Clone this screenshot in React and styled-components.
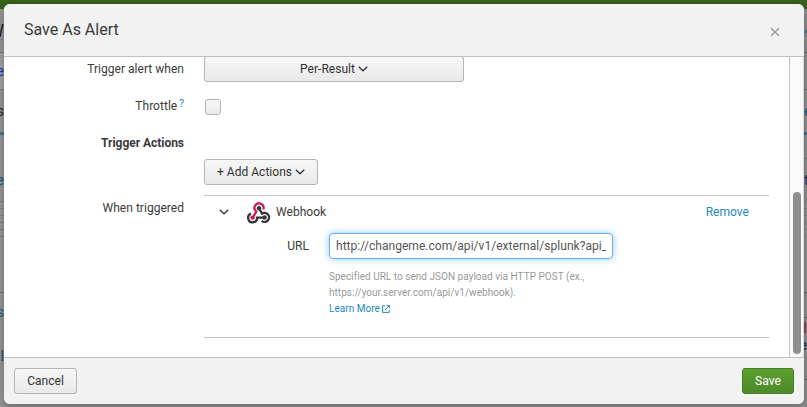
import React from "react";
import styled, { createGlobalStyle, css } from "styled-components";

const GlobalStyle = createGlobalStyle`
  * { box-sizing: border-box; }
  html, body { margin: 0; width: 100%; height: 100%; overflow: hidden; }
  body { font: 12px/16px Roboto, "Liberation Sans", sans-serif; color: #3a3a3a; letter-spacing: 0.03px; }
`;

const Page = styled.div`
  position: relative;
  width: 807px;
  height: 407px;
  overflow: hidden;
  background: #8c8c8c;
`;
const TopBar = styled.div`
  height: 9px;
  background: #38611c;
`;
const Backdrop = styled.div`
  display: flex;
  justify-content: space-between;
`;
const Edge = styled.div`
  width: ${(p) => p.$w}px;
  height: 398px;
  overflow: hidden;
  background: ${(p) => p.$bg};
`;
const Strip = styled.div`
  display: flex;
  justify-content: ${(p) => p.$side || "flex-end"};
  align-items: center;
  height: ${(p) => p.$h}px;
  background: ${(p) => p.$bg || "transparent"};
  border-bottom: ${(p) => (p.$line ? `1px solid ${p.$line}` : "0")};
  color: ${(p) => p.$ink || "#222"};
  font-size: ${(p) => p.$size || 14}px;
  line-height: 14px;
  overflow: hidden;
`;

const Modal = styled.section`
  position: absolute;
  left: 4px;
  top: 4px;
  width: 800px;
  height: 400px;
  display: flex;
  flex-direction: column;
  overflow: hidden;
  border-radius: 6px;
  background: #fff;
`;
const ModalShadow = styled.div`
  position: absolute;
  left: 4px;
  top: 4px;
  width: 800px;
  height: 400px;
  border-radius: 6px;
  box-shadow: 0 2px 6px rgba(0, 0, 0, 0.25);
`;
const Header = styled.header`
  flex: 0 0 53px;
  display: flex;
  align-items: center;
  justify-content: space-between;
  padding: 0 24px 1px 20px;
  background: #f2f2f2;
  border-bottom: 1px solid #c0c0c0;
`;
const Title = styled.h1`
  margin: 0;
  font-size: 16px;
  line-height: 20px;
  font-weight: 400;
  letter-spacing: 0;
`;
const Close = styled.button`
  display: flex;
  margin-top: 5px;
  padding: 0;
  border: 0;
  background: none;
  color: #a3a3a3;
`;
const Body = styled.div`
  flex: 0 0 300px;
  display: flex;
  overflow: hidden;
`;
const Form = styled.div`
  flex: 1;
  padding-right: 20px;
`;
const Track = styled.div`
  flex: 0 0 15px;
  padding: 135px 2px 0 3px;
  background: #fafafa;
  border-left: 1px solid #c0c0c0;
  border-right: 1px solid #dadada;
`;
const Thumb = styled.div`
  width: 8px;
  height: 162px;
  border-radius: 4px;
  background: #8f8f8f;
`;
const Row = styled.div`
  display: flex;
  gap: 20px;
  height: ${(p) => p.$h}px;
`;
const Label = styled.div`
  flex: 0 0 180px;
  padding-top: ${(p) => p.$top || 0}px;
  text-align: right;
  font-weight: ${(p) => (p.$bold ? 700 : 400)};
  ${(p) => p.$bold && css`letter-spacing: -0.03px;`}
  ${(p) => p.$raised && css`margin-top: -1px;`}
`;
const Hint = styled.sup`
  margin-left: 2px;
  font-size: 10px;
  line-height: 0;
  vertical-align: 3px;
  color: #1e88bd;
`;
const Button = styled.button`
  display: flex;
  align-items: center;
  justify-content: center;
  gap: 3px;
  width: ${(p) => p.$w}px;
  height: 26px;
  padding: 0;
  border: 1px solid #b4b4b4;
  border-radius: 3px;
  background: linear-gradient(#f7f7f7, #e9e9e9);
  color: #333;
  font: inherit;
  letter-spacing: inherit;
  ${(p) => p.$clipped && css`margin-top: -1px;`}
  ${(p) => p.$primary && css`
    border-color: #457d24;
    background: linear-gradient(#5ba030, #4d8a28);
    color: #fff;
  `}
`;
const Checkbox = styled.span`
  width: 16px;
  height: 16px;
  margin-left: 1px;
  border: 1px solid #b4b4b4;
  border-radius: 3px;
  background: linear-gradient(#f7f7f7, #eaeaea);
`;
const Action = styled.div`
  flex: 1;
  height: 143px;
  border-top: 1px solid #c8c8c8;
  border-bottom: 1px solid #c0c0c0;
`;
const ActionHead = styled.div`
  display: flex;
  align-items: center;
  height: 33px;
  padding: 0 20px 1px 15px;
`;
const ActionIcon = styled.span`
  display: flex;
  margin: 2px 5px 0 18px;
`;
const Remove = styled.a`
  margin-left: auto;
  color: #1e88bd;
`;
const Field = styled.div`
  display: grid;
  grid-template-columns: 105px 284px;
  column-gap: 20px;
  padding-top: 4px;
`;
const FieldLabel = styled.label`
  padding-top: 5px;
  text-align: right;
`;
const UrlInput = styled.input`
  width: 284px;
  height: 26px;
  padding: 0 6px;
  border: 1px solid #62b0f3;
  border-radius: 4px;
  outline: 0;
  box-shadow: 0 0 7px rgba(82, 168, 236, 0.6);
  color: #555;
  font: inherit;
  letter-spacing: 0.04px;
`;
const Help = styled.p`
  grid-column: 2;
  margin: 10px 0 0;
  font-size: 10px;
  line-height: 16px;
  color: #999;
`;
const Learn = styled.a`
  display: flex;
  align-items: center;
  gap: 2px;
  color: #1e88bd;
`;
const Footer = styled.footer`
  flex: 1;
  display: flex;
  justify-content: space-between;
  padding: 10px 10px 0;
  background: #f2f2f2;
  border-top: 1px solid #c0c0c0;
`;

const Chevron = () => (
  <svg width="10" height="6" viewBox="0 0 10 6" fill="none" stroke="#333" strokeWidth="1.2">
    <path d="M.8 .8 5 4.8 9.2 .8" />
  </svg>
);

const WebhookIcon = () => (
  <svg width="24" height="22" viewBox="0 0 24 22" fill="none" strokeWidth="2.3">
    <path stroke="#d11b58" d="M16.3 7.3A4.5 4.5 0 1 0 9.3 9.5L5.8 15.5" />
    <path stroke="#333538" d="M12 6.2 15.1 11.6A4.5 4.5 0 1 1 14.6 18.8" />
    <path stroke="#333538" d="M4 11.6A4.5 4.5 0 1 0 10.1 15.6H17.5" />
    <circle cx="12" cy="6.2" r="2.2" fill="#333538" />
    <circle cx="5.6" cy="15.6" r="2.2" fill="#d11b58" />
    <circle cx="17.6" cy="15.5" r="2.2" fill="#333538" />
  </svg>
);

const ExternalIcon = () => (
  <svg width="8" height="8" viewBox="0 0 8 8" fill="none" stroke="#1e88bd">
    <path d="M3 .8H.6V7.4H7.2V5M4.4 .6H7.4V3.6M7.2 .8 3 5" />
  </svg>
);

const ruled = [0, 1, 2, 3, 4];

export default function App() {
  return (
    <Page>
      <GlobalStyle />
      <TopBar />
      <Backdrop>
        <Edge $w={4} $bg="#949392">
          <Strip $h={44} $line="#777" $size={18}>W</Strip>
          <Strip $h={37} $line="#808080" $bg="#9e9e9e" $ink="#1d2fbb">e</Strip>
          <Strip $h={42} $bg="#929292">s</Strip>
          <Strip $h={3} $bg="#3f7292" />
          <Strip $h={24} />
          <Strip $h={43} $line="#7b7b7b" $ink="#15587c">e</Strip>
          {ruled.map((n) => <Strip key={n} $h={7} $line="#7b7b7b" />)}
          <Strip $h={56} $line="#6f6f6f" />
          <Strip $h={37} $ink="#15587c">s</Strip>
          <Strip $h={52} $ink="#15436a">l</Strip>
        </Edge>
        <Edge $w={3} $bg="#8c8c8c">
          <Strip $h={44} $line="#666" $ink="#15587c" $side="flex-start">~</Strip>
          <Strip $h={37} $line="#707070" />
          <Strip $h={42} $ink="#15587c" $side="flex-start">e</Strip>
          <Strip $h={3} $bg="#3f7292" />
          <Strip $h={24} $line="#747474" />
          <Strip $h={43} $line="#7f7f7f" $ink="#2a2a55" $side="flex-start">t</Strip>
          {ruled.map((n) => <Strip key={n} $h={7} $line="#7f7f7f" />)}
          <Strip $h={56} $line="#626262" />
          <Strip $h={25} $line="#626262" />
          <Strip $h={20} $ink="#8b2b20">I</Strip>
          <Strip $h={14} $ink="#25204a">e</Strip>
          <Strip $h={28} $line="#626262" />
        </Edge>
      </Backdrop>
      <ModalShadow />
      <Modal>
        <Header>
          <Title>Save As Alert</Title>
          <Close aria-label="Close">
            <svg width="10" height="10" viewBox="0 0 10 10" fill="none" stroke="currentColor" strokeWidth="1.7">
              <path d="M1 1 9 9M9 1 1 9" />
            </svg>
          </Close>
        </Header>
        <Body>
          <Form>
            <Row $h={42}>
              <Label $top={4}>Trigger alert when</Label>
              <Button $w={260} $clipped>Per-Result <Chevron /></Button>
            </Row>
            <Row $h={36}>
              <Label $raised>Throttle<Hint>?</Hint></Label>
              <Checkbox />
            </Row>
            <Row $h={24}>
              <Label $bold>Trigger Actions</Label>
            </Row>
            <Row $h={36}>
              <Label />
              <Button $w={114}>+ Add Actions <Chevron /></Button>
            </Row>
            <Row $h={143}>
              <Label $top={5}>When triggered</Label>
              <Action>
                <ActionHead>
                  <Chevron />
                  <ActionIcon><WebhookIcon /></ActionIcon>
                  Webhook
                  <Remove>Remove</Remove>
                </ActionHead>
                <Field>
                  <FieldLabel>URL</FieldLabel>
                  <UrlInput readOnly value="http://changeme.com/api/v1/external/splunk?api_" />
                  <Help>
                    Specified URL to send JSON payload via HTTP POST (ex.,
                    https://your.server.com/api/v1/webhook).
                    <Learn>Learn More <ExternalIcon /></Learn>
                  </Help>
                </Field>
              </Action>
            </Row>
          </Form>
          <Track><Thumb /></Track>
        </Body>
        <Footer>
          <Button $w={63}>Cancel</Button>
          <Button $w={52} $primary>Save</Button>
        </Footer>
      </Modal>
    </Page>
  );
}
